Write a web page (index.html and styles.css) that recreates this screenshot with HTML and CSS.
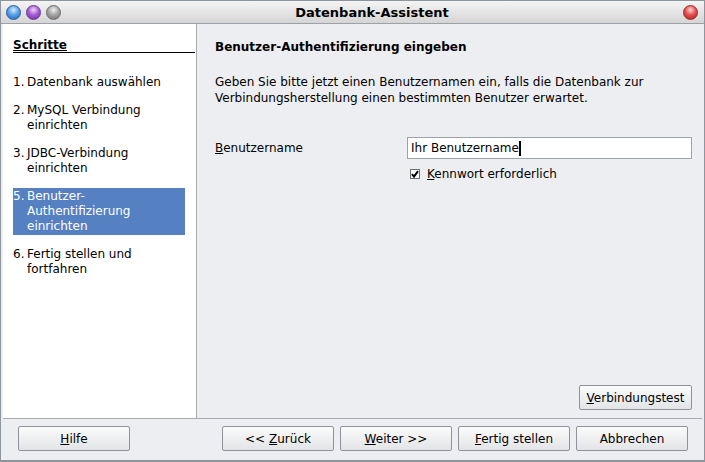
FILE: index.html
```html
<!DOCTYPE html>
<html lang="de">
<head>
  <meta charset="UTF-8" />
  <title>Datenbank-Assistent</title>
  <link rel="stylesheet" href="styles.css">
</head>
<body>
  <div class="window">
    <div class="titlebar">
      <div class="lights">
        <span class="light blue"></span>
        <span class="light purple"></span>
        <span class="light gray"></span>
      </div>
      <div class="title">Datenbank-Assistent</div>
      <span class="light red"></span>
    </div>

    <div class="main">
      <aside class="steps">
        <div class="steps-head">Schritte</div>
        <ul class="step-list">
          <li><span class="num">1.</span><span>Datenbank auswählen</span></li>
          <li><span class="num">2.</span><span>MySQL Verbindung einrichten</span></li>
          <li><span class="num">3.</span><span>JDBC-Verbindung einrichten</span></li>
          <li class="active"><span class="num">5.</span><span>Benutzer-<br>Authentifizierung einrichten</span></li>
          <li><span class="num">6.</span><span>Fertig stellen und fortfahren</span></li>
        </ul>
      </aside>

      <section class="content">
        <h1>Benutzer-Authentifizierung eingeben</h1>
        <p class="intro">Geben Sie bitte jetzt einen Benutzernamen ein, falls die Datenbank zur Verbindungsherstellung einen bestimmten Benutzer erwartet.</p>

        <div class="form-row">
          <label class="field-label"><u>B</u>enutzername</label>
          <div class="input">Ihr Benutzername<span class="caret"></span></div>
        </div>
        <div class="check-row">
          <svg class="checkbox" width="10" height="10" viewBox="0 0 10 10">
            <rect x="0.5" y="0.5" width="9" height="9" fill="#fff" stroke="#6b6f75"/>
            <path d="M2 5.2 L4 7.6 L8 2.2" fill="none" stroke="#000" stroke-width="2"/>
          </svg>
          <span><u>K</u>ennwort erforderlich</span>
        </div>

        <div class="test-row">
          <button class="btn btn-test"><u>V</u>erbindungstest</button>
        </div>
      </section>
    </div>

    <div class="footer">
      <button class="btn"><u>H</u>ilfe</button>
      <div class="nav">
        <button class="btn">&lt;&lt; <u>Z</u>urück</button>
        <button class="btn"><u>W</u>eiter &gt;&gt;</button>
        <button class="btn"><u>F</u>ertig stellen</button>
        <button class="btn">Abbrechen</button>
      </div>
    </div>
  </div>
</body>
</html>
```

FILE: styles.css
```css
body {
  margin: 0;
  font-family: "DejaVu Sans", sans-serif;
  font-size: 12px;
  color: #000;
  background: #edeef2;
}

.window {
  width: 705px;
  height: 462px;
  box-sizing: border-box;
  border: 1px solid #8f959c;
  border-bottom-width: 2px;
  background: #edeef2;
  display: flex;
  flex-direction: column;
  overflow: hidden;
}

.titlebar {
  height: 22px;
  border-bottom: 1px solid #9ca1a7;
  background: linear-gradient(#f4f4f4, #d5d5d5);
  display: flex;
  align-items: center;
  padding: 0 6px 0 5px;
}

.lights {
  display: flex;
  gap: 5px;
}

.light {
  width: 15px;
  height: 15px;
  border-radius: 50%;
  box-sizing: border-box;
  display: inline-block;
}

.light.blue {
  background: radial-gradient(circle at 50% 30%, #d6ecff 0, #5aa2e6 45%, #1f64b4 100%);
  border: 1px solid #2a5f9e;
}

.light.purple {
  background: radial-gradient(circle at 50% 30%, #f1d6ff 0, #a75fd6 45%, #6b2a99 100%);
  border: 1px solid #6a3590;
}

.light.gray {
  background: radial-gradient(circle at 50% 30%, #f0f0f0 0, #a6a6a6 45%, #6c6c6c 100%);
  border: 1px solid #6e6e6e;
}

.light.red {
  background: radial-gradient(circle at 50% 30%, #ffd6d6 0, #e65252 45%, #a81c1c 100%);
  border: 1px solid #9c2a2a;
}

.title {
  flex: 1;
  text-align: center;
  font-weight: bold;
  font-size: 13px;
}

.main {
  height: 394px;
  display: flex;
  margin: 0 2px;
}

.steps {
  width: 192px;
  background: #fff;
  border-right: 1px solid #a7abb1;
  padding: 14px 1px 0 10px;
  box-sizing: border-box;
  width: 194px;
}

.steps-head {
  font-weight: bold;
  text-decoration: underline;
  line-height: 14px;
  border-bottom: 1px solid #000;
  padding-left: 0;
}

.step-list {
  list-style: none;
  margin: 21px 10px 0 0;
  padding: 0;
  display: flex;
  flex-direction: column;
  gap: 11px;
}

.step-list li {
  display: flex;
  line-height: 15px;
  padding: 1px 0;
}

.step-list .num {
  width: 14px;
  flex: none;
}

.step-list li.active {
  background: #5581c3;
  color: #fff;
}

.content {
  flex: 1;
  display: flex;
  flex-direction: column;
  padding: 15px 10px 8px 18px;
}

.content h1 {
  font-size: 12px;
  font-weight: bold;
  line-height: 16px;
  margin: 0;
}

.intro {
  margin: 19px 0 0;
  line-height: 16px;
}

.form-row {
  display: flex;
  align-items: center;
  margin-top: 31px;
}

.field-label {
  width: 192px;
  flex: none;
}

.input {
  flex: 1;
  height: 22px;
  box-sizing: border-box;
  border: 1px solid #9ea3aa;
  background: #fff;
  padding: 0 3px;
  line-height: 20px;
  display: flex;
  align-items: center;
}

.caret {
  display: inline-block;
  width: 2px;
  height: 15px;
  background: #000;
}

.check-row {
  display: flex;
  align-items: center;
  margin: 7px 0 0 195px;
  line-height: 16px;
  gap: 7px;
}

.test-row {
  margin-top: auto;
  display: flex;
  justify-content: flex-end;
}

.btn {
  font-family: "DejaVu Sans", sans-serif;
  font-size: 12px;
  color: #000;
  height: 25px;
  width: 112px;
  border: 1px solid #8e939a;
  border-radius: 2px;
  background: linear-gradient(#fbfbfb, #e3e4e7);
  padding: 0;
}

.btn-test {
  width: 113px;
}

.footer {
  margin: 0 2px;
  border-top: 1px solid #a7abb1;
  padding: 7px 14px 9px 15px;
  display: flex;
  justify-content: space-between;
}

.nav {
  display: flex;
  gap: 6px;
}
```
